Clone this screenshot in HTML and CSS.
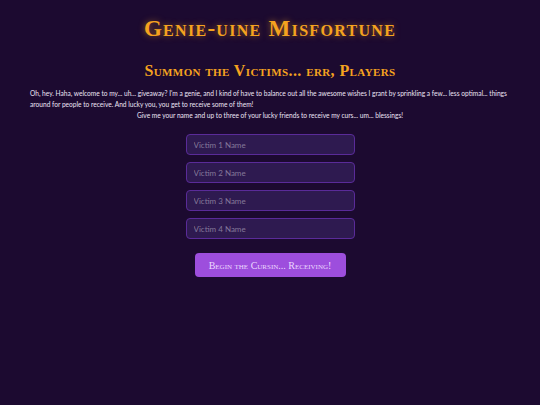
FILE: index.html
```html
<!DOCTYPE html>
<html>
<head>
<meta charset="utf-8">
<link rel="stylesheet" href="styles.css">
</head>
<body>
<main class="page">
  <h1 class="title">Genie-uine Misfortune</h1>
  <h2 class="subtitle">Summon the Victims... err, Players</h2>
  <div class="intro">
    <p class="intro-text">Oh, hey. Haha, welcome to my... uh... giveaway? I'm a genie, and I kind of have to balance out all the awesome wishes I grant by sprinkling a few... less optimal... things around for people to receive. And lucky you, you get to receive some of them!</p>
    <p class="intro-ask">Give me your name and up to three of your lucky friends to receive my curs... um... blessings!</p>
  </div>
  <form class="form">
    <input class="field" type="text" placeholder="Victim 1 Name">
    <input class="field" type="text" placeholder="Victim 2 Name">
    <input class="field" type="text" placeholder="Victim 3 Name">
    <input class="field" type="text" placeholder="Victim 4 Name">
    <button class="submit" type="button">Begin the Cursin... Receiving!</button>
  </form>
</main>
</body>
</html>
```

FILE: styles.css
```css
html, body {
  margin: 0;
  padding: 0;
  background: #1c0a30;
  height: 100%;
}
body {
  font-family: Lato, "Liberation Sans", sans-serif;
  color: #ece4f5;
}
.page {
  display: flex;
  flex-direction: column;
  align-items: center;
  padding-top: 14px;
}
.title {
  margin: 0;
  font-family: "Liberation Serif", serif;
  font-variant: small-caps;
  font-weight: bold;
  font-size: 23px;
  line-height: 30px;
  letter-spacing: 1.3px;
  color: #f5a31f;
  text-shadow: 0 0 6px rgba(245, 163, 31, 0.55);
}
.subtitle {
  margin: 17px 0 0;
  font-family: "Liberation Serif", serif;
  font-variant: small-caps;
  font-weight: bold;
  font-size: 16px;
  line-height: 20px;
  letter-spacing: 0.4px;
  color: #f5a31f;
}
.intro {
  width: 480px;
  margin-top: 7px;
  font-size: 6.6px;
  line-height: 11px;
}
.intro p {
  margin: 0;
}
.intro-ask {
  text-align: center;
}
.form {
  display: flex;
  flex-direction: column;
  align-items: center;
  gap: 7px;
  margin-top: 13px;
}
.field {
  box-sizing: border-box;
  width: 169px;
  height: 21px;
  padding: 0 7px;
  background: #2e1a50;
  border: 1px solid #5a2b99;
  border-radius: 4px;
  color: #e6dcf2;
  font-family: Lato, "Liberation Sans", sans-serif;
  font-size: 8px;
  outline: none;
}
.field::placeholder {
  color: #85799a;
}
.submit {
  margin-top: 7px;
  width: 151px;
  height: 24px;
  background: #9d4edd;
  border: none;
  border-radius: 4px;
  color: #ecd9ff;
  font-family: "Liberation Serif", serif;
  font-variant: small-caps;
  font-size: 10px;
  cursor: pointer;
}
```
